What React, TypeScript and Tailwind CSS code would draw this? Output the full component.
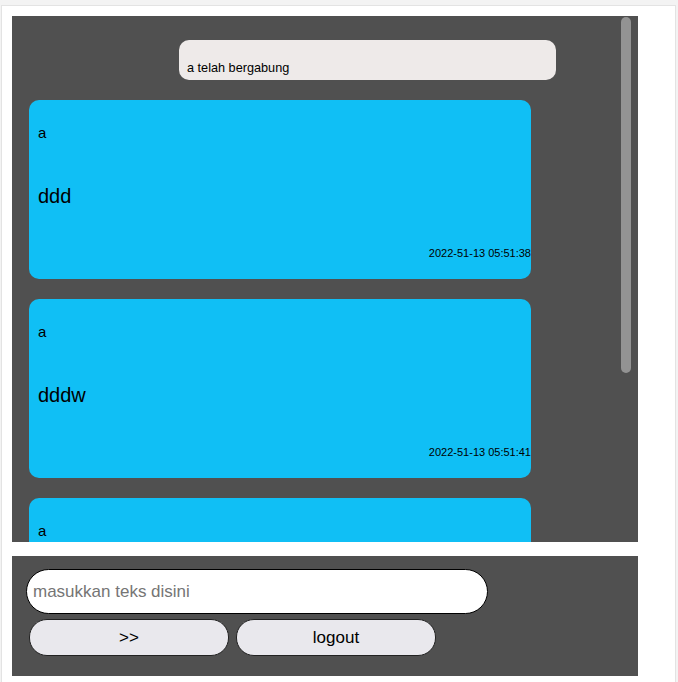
import { useState } from "react";

type Msg = { id: number; user: string; text: string; time: string };

const messages: Msg[] = [
  { id: 1, user: "a", text: "ddd", time: "2022-51-13 05:51:38" },
  { id: 2, user: "a", text: "dddw", time: "2022-51-13 05:51:41" },
  { id: 3, user: "a", text: "dddww", time: "2022-51-13 05:51:44" },
];

// Gelembung chat biru: nama pengirim, isi pesan, lalu waktu di kanan bawah.
function Bubble({ msg }: { msg: Msg }) {
  return (
    <div className="ml-[17px] flex h-[179px] w-[502px] shrink-0 flex-col rounded-[10px] bg-[#10bff5] pt-[24px] text-black">
      <p className="pl-[9px] text-[15px] leading-[18px]">{msg.user}</p>
      <p className="mt-[42px] pl-[9px] text-[20px] leading-[24px]">{msg.text}</p>
      <p className="mt-[39px] text-right text-[11px] leading-[13px]">{msg.time}</p>
    </div>
  );
}

export default function App() {
  const [text, setText] = useState("");

  return (
    <div
      className="min-h-[682px] bg-[#f3f3f3] pl-[1px] pr-[2px] pt-[5px]"
      style={{ fontFamily: '"Liberation Sans", Arial, sans-serif' }}
    >
      <div className="h-[677px] border border-b-0 border-[#e3e3e3] bg-white p-[10px]">
        {/* daftar pesan */}
        <div className="relative h-[526px] w-[626px] overflow-hidden bg-[#505050]">
          <div className="flex flex-col gap-[20px] pt-[24px]">
            <div className="ml-[167px] w-[377px] rounded-[10px] bg-[#eeeae9] pb-[5px] pl-[8px] pt-[21px] text-[12.7px] leading-[14px] text-black">
              a telah bergabung
            </div>
            {messages.map((m) => (
              <Bubble key={m.id} msg={m} />
            ))}
          </div>
          <div className="absolute right-[7px] top-[1px] h-[356px] w-[10px] rounded-full bg-[#939393]" />
        </div>

        {/* input + tombol */}
        <div className="mt-[14px] flex h-[120px] w-[626px] flex-col bg-[#505050] pt-[13px]">
          <input
            value={text}
            onChange={(e) => setText(e.target.value)}
            placeholder="masukkan teks disini"
            className="ml-[14px] h-[45px] w-[462px] rounded-full border border-black bg-white px-[6px] text-[17px] text-black outline-none placeholder:text-[#757575]"
          />
          <div className="ml-[17px] mt-[5px] flex gap-[7px]">
            <button className="h-[37px] w-[200px] rounded-[18px] border border-[#222] bg-[#e9e8ed] text-[17px] text-black">
              &gt;&gt;
            </button>
            <button className="h-[37px] w-[200px] rounded-[18px] border border-[#222] bg-[#e9e8ed] text-[17px] text-black">
              logout
            </button>
          </div>
        </div>
      </div>
    </div>
  );
}
